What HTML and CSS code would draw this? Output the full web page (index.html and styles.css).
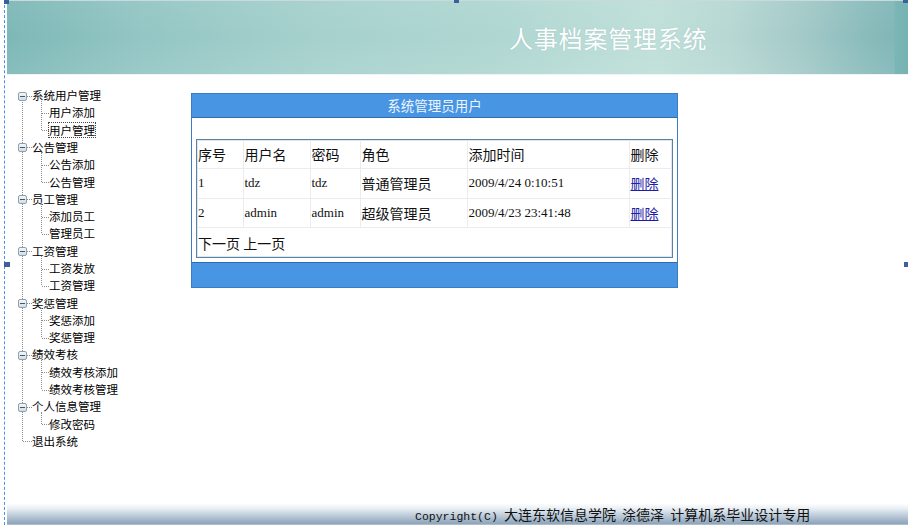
FILE: index.html
```html
<!DOCTYPE html>
<html lang="zh-CN">
<head>
<meta charset="utf-8">
<title>人事档案管理系统</title>
<link rel="stylesheet" href="styles.css">
</head>
<body>
<div class="frame">
  <header class="banner">
    <h1 class="banner-title">人事档案管理系统</h1>
  </header>
  <main class="main">
    <nav class="sidebar">
      <div class="tree">
        <div class="group">
          <div class="node"><span class="toggle"></span><span class="dash"></span><span class="label">系统用户管理</span></div>
          <div class="children">
            <div class="leaf"><span class="dash"></span><span class="label">用户添加</span></div>
            <div class="leaf"><span class="dash"></span><span class="label selected">用户管理</span></div>
          </div>
        </div>
        <div class="group">
          <div class="node"><span class="toggle"></span><span class="dash"></span><span class="label">公告管理</span></div>
          <div class="children">
            <div class="leaf"><span class="dash"></span><span class="label">公告添加</span></div>
            <div class="leaf"><span class="dash"></span><span class="label">公告管理</span></div>
          </div>
        </div>
        <div class="group">
          <div class="node"><span class="toggle"></span><span class="dash"></span><span class="label">员工管理</span></div>
          <div class="children">
            <div class="leaf"><span class="dash"></span><span class="label">添加员工</span></div>
            <div class="leaf"><span class="dash"></span><span class="label">管理员工</span></div>
          </div>
        </div>
        <div class="group">
          <div class="node"><span class="toggle"></span><span class="dash"></span><span class="label">工资管理</span></div>
          <div class="children">
            <div class="leaf"><span class="dash"></span><span class="label">工资发放</span></div>
            <div class="leaf"><span class="dash"></span><span class="label">工资管理</span></div>
          </div>
        </div>
        <div class="group">
          <div class="node"><span class="toggle"></span><span class="dash"></span><span class="label">奖惩管理</span></div>
          <div class="children">
            <div class="leaf"><span class="dash"></span><span class="label">奖惩添加</span></div>
            <div class="leaf"><span class="dash"></span><span class="label">奖惩管理</span></div>
          </div>
        </div>
        <div class="group">
          <div class="node"><span class="toggle"></span><span class="dash"></span><span class="label">绩效考核</span></div>
          <div class="children">
            <div class="leaf"><span class="dash"></span><span class="label">绩效考核添加</span></div>
            <div class="leaf"><span class="dash"></span><span class="label">绩效考核管理</span></div>
          </div>
        </div>
        <div class="group">
          <div class="node"><span class="toggle"></span><span class="dash"></span><span class="label">个人信息管理</span></div>
          <div class="children">
            <div class="leaf"><span class="dash"></span><span class="label">修改密码</span></div>
          </div>
        </div>
        <div class="node"><span class="dash long"></span><span class="label">退出系统</span></div>
      </div>
    </nav>
    <section class="panel">
      <div class="panel-title">系统管理员用户</div>
      <div class="panel-body">
        <div class="grid-wrap">
          <table class="grid">
            <colgroup>
              <col class="c1"><col class="c2"><col class="c3"><col class="c4"><col class="c5"><col class="c6">
            </colgroup>
            <tr class="head">
              <td>序号</td><td>用户名</td><td>密码</td><td>角色</td><td>添加时间</td><td>删除</td>
            </tr>
            <tr>
              <td class="en">1</td><td class="en">tdz</td><td class="en">tdz</td><td>普通管理员</td><td class="en">2009/4/24 0:10:51</td><td><a class="del" href="#">删除</a></td>
            </tr>
            <tr>
              <td class="en">2</td><td class="en">admin</td><td class="en">admin</td><td>超级管理员</td><td class="en">2009/4/23 23:41:48</td><td><a class="del" href="#">删除</a></td>
            </tr>
            <tr class="pager">
              <td colspan="6">下一页 上一页</td>
            </tr>
          </table>
        </div>
      </div>
      <div class="panel-foot"></div>
    </section>
  </main>
  <footer class="footer">
    <span class="copy-en">Copyright(C)</span> 大连东软信息学院 涂德泽 计算机系毕业设计专用
  </footer>
</div>
<span class="handle h-tl"></span>
<span class="handle h-tm"></span>
<span class="handle h-tr"></span>
<span class="handle h-ml"></span>
<span class="handle h-mr"></span>
</body>
</html>
```

FILE: styles.css
```css
* { box-sizing: border-box; }

html, body {
  margin: 0;
  padding: 0;
  height: 100%;
  background: #ffffff;
}

body {
  font-family: "Noto Sans CJK SC", "Noto Sans", sans-serif;
  color: #111;
  padding-left: 4px;
  overflow: hidden;
}

.frame {
  height: 525px;
  border-left: 1px dashed #4d8ff0;
  padding-left: 2px;
  display: flex;
  flex-direction: column;
}

/* ---------- banner ---------- */
.banner {
  height: 75px;
  border-top: 1px solid #c9d9dc;
  border-bottom: 1px solid #eef5f5;
  background:
    linear-gradient(90deg, rgba(0,0,0,0) 0, rgba(0,0,0,0) 887px, #7ab6b6 888px, #78b3b4 100%),
    linear-gradient(180deg, rgba(255,255,255,0.05) 0%, rgba(255,255,255,0) 50%, rgba(255,255,255,0.08) 100%),
    linear-gradient(90deg, #7db8b7 0%, #93c6c4 15%, #a6d1cd 35%, #b0d7d2 55%, #bfdfd9 72%, #b7d8d3 80%, #a4cac8 88%, #8bbcbc 95%, #82b7b8 98%);
  display: flex;
  align-items: flex-start;
}

.banner-title {
  margin: 22px 0 0 502px;
  font-family: "Noto Sans CJK SC", sans-serif;
  font-weight: 400;
  font-size: 24px;
  line-height: 30px;
  letter-spacing: 0.8px;
  color: #ffffff;
  text-shadow: 0 0 1px rgba(90,140,140,0.4);
}

/* ---------- main ---------- */
.main {
  flex: 1;
  display: flex;
  align-items: flex-start;
}

.sidebar {
  width: 184px;
  padding: 11.4px 0 0 11px;
  flex: none;
}

.tree {
  position: relative;
  font-size: 11.5px;
  color: #000;
}

.tree::before {
  content: "";
  position: absolute;
  left: 4px;
  top: 12px;
  bottom: 8.6px;
  border-left: 1px dotted #8c8c8c;
}

.node, .leaf {
  height: 17.3px;
  display: flex;
  align-items: center;
  white-space: nowrap;
  position: relative;
}

.toggle {
  width: 9px;
  height: 9px;
  border: 1px solid #8fa0ae;
  border-radius: 2px;
  background: linear-gradient(180deg, #f4f7f9 0%, #d3dde5 100%);
  position: relative;
  flex: none;
  z-index: 1;
  margin-top: 2px;
}

.toggle::after {
  content: "";
  position: absolute;
  left: 1px;
  right: 1px;
  top: 3px;
  height: 1px;
  background: #45586a;
}

.dash {
  width: 5px;
  border-top: 1px dotted #8c8c8c;
  flex: none;
  margin-top: 2px;
}

.dash.long {
  width: 9px;
  margin-left: 5px;
}

.label {
  line-height: 14px;
}

.label.selected {
  outline: 1px dotted #444;
  outline-offset: 0;
}

.children {
  position: relative;
}

.children::before {
  content: "";
  position: absolute;
  left: 23px;
  top: -3px;
  height: calc(100% - 5.6px);
  border-left: 1px dotted #8c8c8c;
}

.leaf {
  padding-left: 24px;
}

.leaf .dash {
  width: 7px;
}

/* ---------- panel ---------- */
.panel {
  width: 487px;
  margin-top: 18px;
  border: 1px solid #3b7dc2;
  background: #ffffff;
  flex: none;
}

.panel-title {
  height: 24px;
  line-height: 23px;
  background: #4795e3;
  border-bottom: 1px solid #2f6ca8;
  color: #eef4ff;
  text-align: center;
  font-size: 13.5px;
}

.panel-body {
  padding: 21px 4px 4px 4px;
}

.grid-wrap {
  border: 1px solid #5a83a2;
  box-shadow: inset 0 0 0 1px #dfe7ee;
}

.grid {
  width: 475px;
  border-collapse: collapse;
  table-layout: fixed;
  border-style: hidden;
  font-size: 14px;
}

.grid .c1 { width: 46px; }
.grid .c2 { width: 67px; }
.grid .c3 { width: 50px; }
.grid .c4 { width: 107px; }
.grid .c5 { width: 162px; }
.grid .c6 { width: 43px; }

.grid td {
  border: 1px solid #ececec;
  padding: 0 1px;
  height: 29.6px;
  vertical-align: middle;
  white-space: nowrap;
  font-family: "Noto Sans CJK SC", sans-serif;
}

.grid tr.head td {
  height: 28.6px;
}

.grid td.en {
  font-family: "Liberation Serif", "Times New Roman", serif;
  font-size: 13px;
}

.del {
  color: #1d1da8;
  text-decoration: underline;
}

.panel-foot {
  height: 25px;
  background: #4795e3;
  border-top: 1px solid #2f6ca8;
}

/* ---------- footer ---------- */
.footer {
  height: 22px;
  padding-left: 408px;
  font-size: 14px;
  line-height: 22px;
  word-spacing: 3px;
  color: #111;
  white-space: nowrap;
  background: linear-gradient(180deg, #ffffff 0%, #eef2f6 22%, #c6d3df 50%, #9fb3c6 80%, #8ea4b9 95%, #c9d3dc 100%);
}

.copy-en {
  font-family: "Liberation Mono", "Courier New", monospace;
  font-size: 11.5px;
  word-spacing: 0;
}

/* ---------- design-view handles ---------- */
.handle {
  position: absolute;
  width: 6px;
  height: 5px;
  background: #3d5f9e;
}

.h-tl { left: 4px; top: 0; width: 5px; height: 4px; }
.h-tm { left: 454px; top: 0; height: 3px; width: 5px; }
.h-tr { left: 903px; top: 0; height: 3px; width: 5px; }
.h-ml { left: 4px; top: 262px; }
.h-mr { left: 904px; top: 262px; width: 4px; }
```
